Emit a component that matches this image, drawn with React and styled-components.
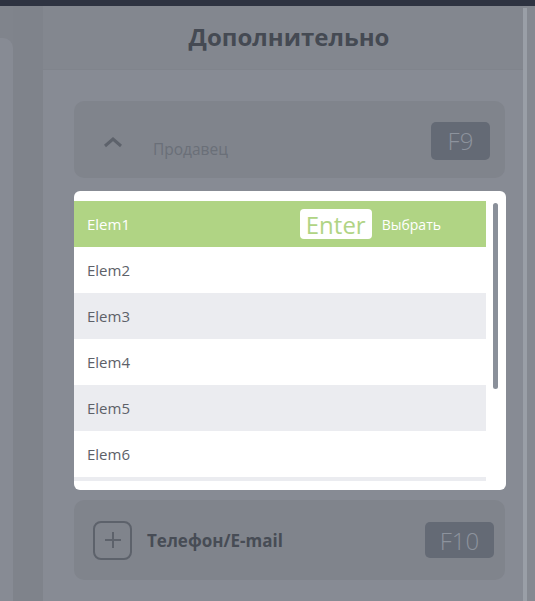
import React from 'react';
import styled, { createGlobalStyle } from 'styled-components';

const GlobalStyle = createGlobalStyle`
  html, body {
    margin: 0;
    padding: 0;
    background: #858991;
    font-family: "Open Sans", "Liberation Sans", sans-serif;
  }
`;

const Screen = styled.div`
  width: 535px;
  height: 601px;
  display: flex;
  flex-direction: column;
  overflow: hidden;
`;

const TopBar = styled.div`
  height: 6px;
  background: #2e3341;
  flex-shrink: 0;
`;

const Body = styled.div`
  flex: 1;
  display: flex;
  min-height: 0;
`;

const LeftColumn = styled.div`
  width: 13px;
  display: flex;
  flex-direction: column;
  background: #80848c;
  flex-shrink: 0;
`;

const LeftPanel = styled.div`
  flex: 1;
  margin-top: 32px;
  background: #878b94;
  border-top-right-radius: 10px;
`;

const Strip = styled.div`
  width: 30px;
  background: #7f838b;
  flex-shrink: 0;
`;

const Main = styled.div`
  width: 480px;
  display: flex;
  flex-direction: column;
  background: #878b94;
  flex-shrink: 0;
`;

const Header = styled.div`
  height: 63px;
  display: flex;
  align-items: center;
  justify-content: center;
  padding-left: 12px;
  background: #83878f;
  border-bottom: 1px solid #80848c;
`;

const Title = styled.h2`
  margin: 0;
  font-size: 24px;
  font-weight: 700;
  color: #454a53;
  padding-bottom: 2px;
`;

const Content = styled.div`
  padding: 31px 18px 0 31px;
  display: flex;
  flex-direction: column;
`;

const Card = styled.div`
  height: ${p => p.h}px;
  background: #80848c;
  border-radius: 10px;
  display: flex;
  align-items: center;
  padding: 0 ${p => p.pr}px 0 ${p => p.pl}px;
`;

const Chevron = styled.svg`
  width: 20px;
  height: 12px;
  margin-top: 5px;
`;

const CardLabel = styled.span`
  flex: 1;
  font-size: ${p => (p.bold ? 17 : 15.5)}px;
  font-weight: ${p => (p.bold ? 700 : 400)};
  color: ${p => (p.bold ? '#474c55' : '#6a6f78')};
  margin-left: ${p => p.ml}px;
  margin-top: ${p => p.mt || 0}px;
`;

const Key = styled.div`
  width: ${p => p.w}px;
  height: ${p => p.hh}px;
  border-radius: 5px;
  background: #646a75;
  color: #8d939d;
  font-size: 24px;
  font-weight: 300;
  display: flex;
  align-items: center;
  justify-content: center;
  margin-top: ${p => p.mt || 0}px;
`;

const PlusBox = styled.div`
  width: 35px;
  height: 35px;
  border: 2px solid #5d626b;
  border-radius: 8px;
  display: flex;
  align-items: center;
  justify-content: center;
`;

const Dropdown = styled.div`
  margin: 13px -1px 10px 0;
  height: 299px;
  background: #fff;
  border-radius: 6px;
  padding-top: 10px;
  box-sizing: border-box;
  display: flex;
`;

const List = styled.div`
  width: 412px;
  height: 280px;
  overflow: hidden;
`;

const Row = styled.div`
  height: 46px;
  display: flex;
  align-items: center;
  padding-left: 13px;
  background: ${p => (p.active ? '#b0d484' : p.odd ? '#ebecf0' : '#fff')};
  color: ${p => (p.active ? '#fff' : '#5d6169')};
  font-size: 15px;
`;

const RowText = styled.span`
  flex: 1;
`;

const EnterKey = styled.span`
  background: #fff;
  color: #b0d484;
  font-size: 24px;
  border-radius: 4px;
  height: 30px;
  padding: 0 6px;
  display: flex;
  align-items: center;
  margin-right: 10px;
`;

const Hint = styled.span`
  font-size: 14px;
  color: #fff;
  margin-right: 45px;
`;

const Track = styled.div`
  flex: 1;
  display: flex;
  justify-content: center;
  padding-top: 2px;
`;

const Thumb = styled.div`
  width: 5px;
  height: 186px;
  border-radius: 3px;
  background: #8a909a;
  margin-left: -2px;
`;

const Scroll = styled.div`
  width: 4px;
  margin-top: 2px;
  background: #9a9fa7;
  flex-shrink: 0;
`;

const RightGap = styled.div`
  flex: 1;
  background: #858991;
`;

const items = ['Elem1', 'Elem2', 'Elem3', 'Elem4', 'Elem5', 'Elem6', ''];

const App = () => (
  <>
    <GlobalStyle />
    <Screen>
      <TopBar />
      <Body>
        <LeftColumn>
          <LeftPanel />
        </LeftColumn>
        <Strip />
        <Main>
          <Header>
            <Title>Дополнительно</Title>
          </Header>
          <Content>
            <Card h={77} pl={29} pr={15}>
              <Chevron viewBox="0 0 20 12">
                <path d="M2 10 L10 3 L18 10" fill="none" stroke="#5d626b" strokeWidth="3" />
              </Chevron>
              <CardLabel ml={30} mt={19}>Продавец</CardLabel>
              <Key w={59} hh={38} mt={2}>F9</Key>
            </Card>
            <Dropdown>
              <List>
                {items.map((item, i) => (
                  <Row key={i} active={i === 0} odd={i % 2 === 0 && i > 0}>
                    <RowText>{item}</RowText>
                    {i === 0 && (
                      <>
                        <EnterKey>Enter</EnterKey>
                        <Hint>Выбрать</Hint>
                      </>
                    )}
                  </Row>
                ))}
              </List>
              <Track>
                <Thumb />
              </Track>
            </Dropdown>
            <Card h={80} pl={19} pr={11}>
              <PlusBox>
                <svg width="20" height="20" viewBox="0 0 20 20">
                  <path d="M10 2 V18 M2 10 H18" stroke="#5d626b" strokeWidth="2" />
                </svg>
              </PlusBox>
              <CardLabel bold ml={15}>Телефон/E-mail</CardLabel>
              <Key w={69} hh={36}>F10</Key>
            </Card>
          </Content>
        </Main>
        <Scroll />
        <RightGap />
      </Body>
    </Screen>
  </>
);

export default App;
